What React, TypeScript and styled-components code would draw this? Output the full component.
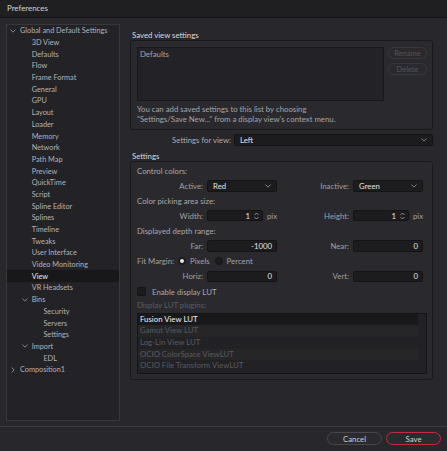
import React from "react"
import styled, { createGlobalStyle } from "styled-components"

const GlobalStyle = createGlobalStyle`
  html, body { margin: 0; padding: 0; background: #28282c; }
  body { font-family: Lato, "Open Sans", "Liberation Sans", sans-serif; font-size: 7.8px; color: #b9b9bc; }
  * { box-sizing: border-box; }
`

type Node = { label: string; depth: number; open?: boolean; closed?: boolean; selected?: boolean }

const tree: Node[] = [
  { label: "Global and Default Settings", depth: 0, open: true },
  { label: "3D View", depth: 1 },
  { label: "Defaults", depth: 1 },
  { label: "Flow", depth: 1 },
  { label: "Frame Format", depth: 1 },
  { label: "General", depth: 1 },
  { label: "GPU", depth: 1 },
  { label: "Layout", depth: 1 },
  { label: "Loader", depth: 1 },
  { label: "Memory", depth: 1 },
  { label: "Network", depth: 1 },
  { label: "Path Map", depth: 1 },
  { label: "Preview", depth: 1 },
  { label: "QuickTime", depth: 1 },
  { label: "Script", depth: 1 },
  { label: "Spline Editor", depth: 1 },
  { label: "Splines", depth: 1 },
  { label: "Timeline", depth: 1 },
  { label: "Tweaks", depth: 1 },
  { label: "User Interface", depth: 1 },
  { label: "Video Monitoring", depth: 1 },
  { label: "View", depth: 1, selected: true },
  { label: "VR Headsets", depth: 1 },
  { label: "Bins", depth: 1, open: true },
  { label: "Security", depth: 2 },
  { label: "Servers", depth: 2 },
  { label: "Settings", depth: 2 },
  { label: "Import", depth: 1, open: true },
  { label: "EDL", depth: 2 },
  { label: "Composition1", depth: 0, closed: true },
]

const luts = [
  "Fusion View LUT",
  "Gamut View LUT",
  "Log-Lin View LUT",
  "OCIO ColorSpace ViewLUT",
  "OCIO File Transform ViewLUT",
]

const Down = () => (
  <svg width="6" height="4" viewBox="0 0 6 4">
    <polyline points="0.5,0.5 3,3.2 5.5,0.5" fill="none" stroke="#8a8a8e" strokeWidth="0.9" />
  </svg>
)

const Right = () => (
  <svg width="4" height="6" viewBox="0 0 4 6">
    <polyline points="0.5,0.5 3.2,3 0.5,5.5" fill="none" stroke="#8a8a8e" strokeWidth="0.9" />
  </svg>
)

const Spin = () => (
  <svg width="5" height="8" viewBox="0 0 5 8">
    <polyline points="0.5,3 2.5,1 4.5,3" fill="none" stroke="#9a9a9e" strokeWidth="0.9" />
    <polyline points="0.5,5 2.5,7 4.5,5" fill="none" stroke="#9a9a9e" strokeWidth="0.9" />
  </svg>
)

const App = () => {
  return (
    <Window>
      <GlobalStyle />
      <TitleBar>Preferences</TitleBar>
      <Body>
        <TreePanel>
          {tree.map((n) => (
            <TreeRow key={n.label} depth={n.depth} selected={n.selected}>
              <Twist>{n.open ? <Down /> : n.closed ? <Right /> : null}</Twist>
              <span>{n.label}</span>
            </TreeRow>
          ))}
        </TreePanel>
        <RightCol>
          <SectionTitle>Saved view settings</SectionTitle>
          <GroupBox>
            <SavedTop>
              <SavedList>Defaults</SavedList>
              <SideButtons>
                <PillButton>Rename</PillButton>
                <PillButton>Delete</PillButton>
              </SideButtons>
            </SavedTop>
            <Hint>
              You can add saved settings to this list by choosing
              <br />
              "Settings/Save New..." from a display view's context menu.
            </Hint>
          </GroupBox>
          <ViewRow>
            <span>Settings for view:</span>
            <Combo wide>
              <span>Left</span>
              <Down />
            </Combo>
          </ViewRow>
          <SectionTitle top={5}>Settings</SectionTitle>
          <GroupBox pad={4}>
            <Caption>Control colors:</Caption>
            <FieldRow>
              <Field>
                <Label>Active:</Label>
                <Combo>
                  <span>Red</span>
                  <Down />
                </Combo>
              </Field>
              <Field right>
                <Label right>Inactive:</Label>
                <Combo>
                  <span>Green</span>
                  <Down />
                </Combo>
              </Field>
            </FieldRow>
            <Caption>Color picking area size:</Caption>
            <FieldRow>
              <Field>
                <Label>Width:</Label>
                <SpinBox>
                  <span>1</span>
                  <Spin />
                </SpinBox>
                <Unit>pix</Unit>
              </Field>
              <Field right>
                <Label right>Height:</Label>
                <SpinBox>
                  <span>1</span>
                  <Spin />
                </SpinBox>
                <Unit>pix</Unit>
              </Field>
            </FieldRow>
            <Caption>Displayed depth range:</Caption>
            <FieldRow>
              <Field>
                <Label>Far:</Label>
                <NumBox>-1000</NumBox>
              </Field>
              <Field right>
                <Label right>Near:</Label>
                <NumBox>0</NumBox>
              </Field>
            </FieldRow>
            <RadioRow>
              <span>Fit Margin:</span>
              <Radio checked />
              <RadioText>Pixels</RadioText>
              <Radio />
              <RadioText>Percent</RadioText>
            </RadioRow>
            <FieldRow>
              <Field>
                <Label>Horiz:</Label>
                <NumBox>0</NumBox>
              </Field>
              <Field right>
                <Label right>Vert:</Label>
                <NumBox>0</NumBox>
              </Field>
            </FieldRow>
            <CheckRow>
              <CheckBox />
              <span>Enable display LUT</span>
            </CheckRow>
            <Caption dim>Display LUT plugins:</Caption>
            <LutList>
              {luts.map((l, i) => (
                <LutRow key={l} selected={i === 0} alt={i % 2 === 1}>
                  {l}
                </LutRow>
              ))}
            </LutList>
          </GroupBox>
        </RightCol>
      </Body>
      <Footer>
        <FootButton>Cancel</FootButton>
        <FootButton primary>Save</FootButton>
      </Footer>
    </Window>
  )
}

export default App

const Window = styled.div`
width: 447px;
height: 451px;
display: flex;
flex-direction: column;
background: #28282c;
overflow: hidden;
`
const TitleBar = styled.div`
height: 18px;
flex: none;
padding-left: 7px;
line-height: 17px;
font-size: 7.9px;
color: #d6d6d8;
background: #1f1f22;
border-bottom: 1px solid #141416;
`
const Body = styled.div`
flex: 1;
display: flex;
padding: 6px 0 5px 6px;
min-height: 0;
`
const TreePanel = styled.div`
width: 114px;
flex: none;
background: #232327;
border: 1px solid #38383c;
`
const TreeRow = styled.div<{ depth: number; selected?: boolean }>`
height: 11.69px;
display: flex;
align-items: center;
padding-left: ${(p) => 2 + p.depth * 11.7}px;
font-size: 7.3px;
color: ${(p) => (p.selected ? "#ececee" : "#b2b2b6")};
background: ${(p) => (p.selected ? "#18181b" : "transparent")};
white-space: nowrap;
`
const Twist = styled.span`
width: 11px;
height: 8px;
flex: none;
display: flex;
align-items: center;
justify-content: center;
padding-right: 3px;
`
const RightCol = styled.div`
flex: 1;
padding: 6px 14px 0 10px;
display: flex;
flex-direction: column;
`
const SectionTitle = styled.div<{ top?: number }>`
height: 10px;
line-height: 10px;
margin-top: ${(p) => p.top || 0}px;
margin-bottom: 0;
padding-left: 2px;
color: #dadadc;
`
const GroupBox = styled.div<{ pad?: number }>`
border: 1px solid #1a1a1d;
border-radius: 3px;
background: #2a2a2e;
padding: ${(p) => p.pad ?? 6}px 5px 5px 6px;
display: flex;
flex-direction: column;
`
const SavedTop = styled.div`
display: flex;
gap: 4px;
`
const SavedList = styled.div`
flex: 1;
height: 54px;
background: #232327;
border: 1px solid #18181b;
padding: 1px 2px;
line-height: 10px;
color: #a6a6aa;
`
const SideButtons = styled.div`
width: 39px;
display: flex;
flex-direction: column;
gap: 4px;
`
const PillButton = styled.div`
height: 12px;
border: 1px solid #38383c;
border-radius: 6px;
display: flex;
align-items: center;
justify-content: center;
font-size: 7.5px;
color: #555559;
`
const Hint = styled.div`
margin-top: 3px;
line-height: 10px;
color: #a4a4a8;
`
const ViewRow = styled.div`
margin-top: 4px;
display: flex;
justify-content: flex-end;
align-items: center;
gap: 3px;
color: #a8a8ac;
`
const Combo = styled.div<{ wide?: boolean }>`
width: ${(p) => (p.wide ? "199px" : "70px")};
height: ${(p) => (p.wide ? "12px" : "11.5px")};
background: #1c1c1f;
border: 1px solid #141416;
border-radius: 2px;
display: flex;
align-items: center;
justify-content: space-between;
padding: 0 5px 0 5px;
color: #e2e2e4;
`
const Caption = styled.div<{ dim?: boolean }>`
height: 10px;
line-height: 10px;
color: ${(p) => (p.dim ? "#5c5c60" : "#a8a8ac")};
margin-bottom: 4px;
`
const FieldRow = styled.div`
display: flex;
height: 11.5px;
margin-bottom: 4.5px;
`
const Field = styled.div<{ right?: boolean }>`
display: flex;
align-items: center;
width: ${(p) => (p.right ? "146px" : "144px")};
`
const Label = styled.span<{ right?: boolean }>`
width: ${(p) => (p.right ? "72px" : "70px")};
padding-right: 4px;
text-align: right;
color: #a0a0a4;
`
const SpinBox = styled.div`
width: 56px;
height: 11px;
background: #1c1c1f;
border: 1px solid #141416;
border-radius: 2px;
display: flex;
align-items: center;
justify-content: flex-end;
gap: 4px;
padding-right: 3px;
color: #e2e2e4;
`
const Unit = styled.span`
margin-left: 4px;
color: #a0a0a4;
`
const NumBox = styled.div`
width: 70px;
height: 11.5px;
background: #1c1c1f;
border: 1px solid #141416;
border-radius: 2px;
display: flex;
align-items: center;
justify-content: flex-end;
padding-right: 4px;
color: #e2e2e4;
`
const RadioRow = styled.div`
display: flex;
align-items: center;
height: 10px;
margin-bottom: 4.5px;
color: #a0a0a4;
span:first-child { margin-right: 4px; }
`
const Radio = styled.span<{ checked?: boolean }>`
width: 8px;
height: 8px;
border-radius: 50%;
background: ${(p) => (p.checked ? "#e8e8ea" : "#1c1c1f")};
border: ${(p) => (p.checked ? "2px solid #1c1c1f" : "1px solid #141416")};
flex: none;
`
const RadioText = styled.span`
margin: 0 5px 0 4px;
`
const CheckRow = styled.div`
display: flex;
align-items: center;
gap: 6px;
height: 10px;
margin-bottom: 3px;
color: #a8a8ac;
`
const CheckBox = styled.span`
width: 9px;
height: 9px;
background: #1c1c1f;
border: 1px solid #141416;
border-radius: 2px;
`
const LutList = styled.div`
margin-top: -1px;
height: 61px;
background: #222226;
border: 1px solid #141416;
padding-right: 8px;
`
const LutRow = styled.div<{ selected?: boolean; alt?: boolean }>`
height: 11.7px;
line-height: 11.7px;
padding-left: 2px;
color: ${(p) => (p.selected ? "#f0f0f2" : "#5a5a5e")};
background: ${(p) => (p.selected ? "#19191c" : p.alt ? "#262629" : "#222226")};
`
const Footer = styled.div`
height: 25px;
flex: none;
border-top: 1px solid #3a3a3e;
background: #28282c;
display: flex;
justify-content: flex-end;
align-items: flex-start;
padding: 5px 6px 0 0;
gap: 4px;
`
const FootButton = styled.div<{ primary?: boolean }>`
width: 55px;
height: 13px;
border-radius: 7px;
border: 1px solid ${(p) => (p.primary ? "#c8283c" : "#48484c")};
background: #2b2b2f;
display: flex;
align-items: center;
justify-content: center;
color: #cfcfd2;
`
